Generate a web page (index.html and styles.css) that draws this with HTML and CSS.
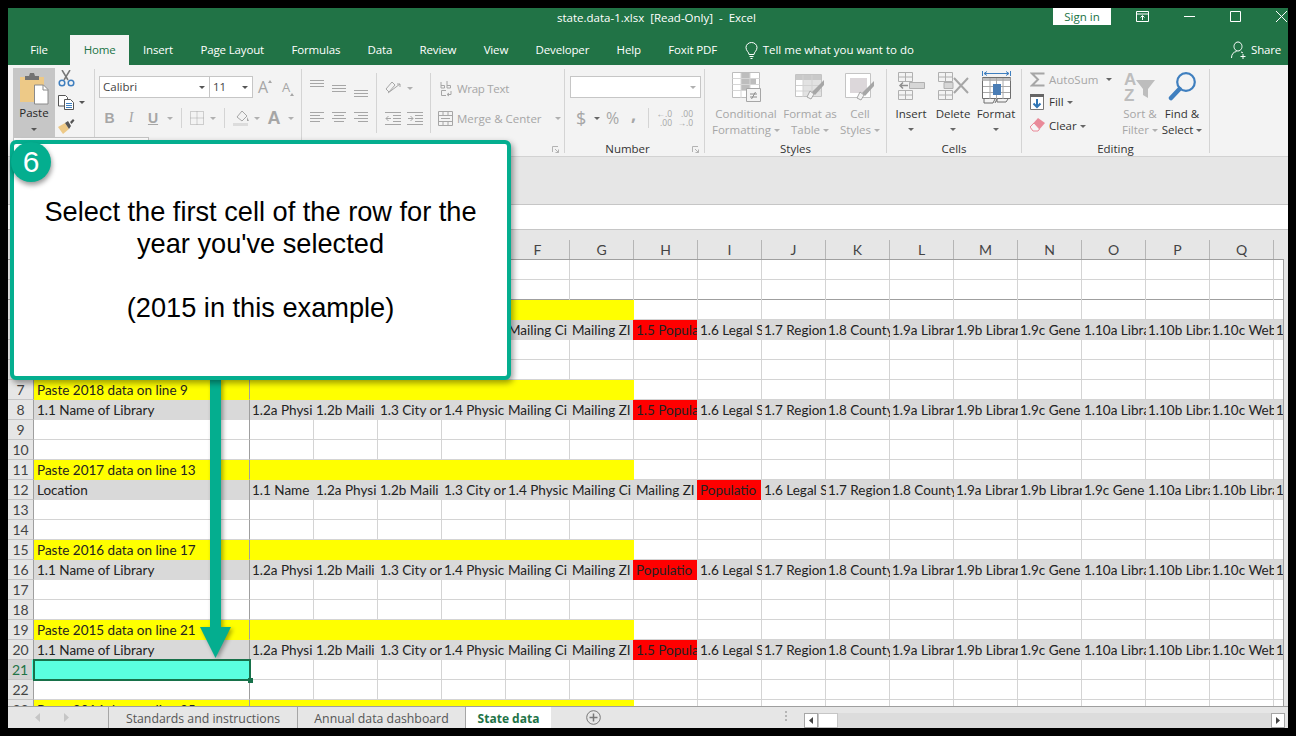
FILE: index.html
```html
<!DOCTYPE html>
<html lang="en">
<head>
  <meta charset="UTF-8">
  <title>state.data-1.xlsx [Read-Only] - Excel</title>
  <link rel="stylesheet" href="styles.css">
</head>
<body>
  <div class="window">

    <svg class="decor" width="448" height="57" viewBox="840 8 448 57">
      <path d="M847 8h3v12h-3zM853 8h3v12h-3zM861 8h4v10h-4zM868 8h4v23h-4zM876 8h4v10h-4zM912 8h14v20l-5 5-9-7zM937 8h12v27h-12zM954 8h3v27h-3zM960 8h3v27h-3zM965 8h3v27h-3zM970 8h3v26h-3zM975 8h3v24h-3zM980 8h3v20h-3zM985 8h3v14h-3z"/>
      <path d="M1005 8a11 7 0 0 0 22 0h-4a7 4 0 0 1-14 0z"/>
      <path d="M1052 30c0 6 6 10 14 10s14-4 14-10l-6 0c0 3-4 5-8 5s-8-2-8-5z"/>
      <path d="M1100 8l70 0-6 22-14 22h-18l-18-14-14-24zM1240 45l48-37v14l-36 31zM1215 34l32-26h12l-38 32z"/>
    </svg>

    <div class="titlebar">
      <span class="doc-title">state.data-1.xlsx &nbsp;[Read-Only] &nbsp;- &nbsp;Excel</span>
      <button class="signin">Sign in</button>
      <span class="winbtn">
        <svg width="14" height="12" viewBox="0 0 14 12" fill="none" stroke="#fff"><path d="M.5.500h12v10H.5zM.5 3h12M6.500 9V5M4.500 6.500l2-2 2 2"/></svg>
      </span>
      <span class="winbtn">
        <svg width="11" height="2" viewBox="0 0 11 2"><path d="M0 .5h11" stroke="#fff"/></svg>
      </span>
      <span class="winbtn">
        <svg width="11" height="11" viewBox="0 0 11 11" fill="none" stroke="#fff"><path d="M.5.500h10v10H.5z"/></svg>
      </span>
      <span class="winbtn winbtn-close">
        <svg width="11" height="11" viewBox="0 0 11 11" fill="none" stroke="#fff"><path d="M0 0l11 11M11 0L0 11"/></svg>
      </span>
    </div>

    <div class="tabs">
      <span class="tab tab-file">File</span>
      <span class="tab tab-on">Home</span>
      <span class="tab">Insert</span>
      <span class="tab">Page Layout</span>
      <span class="tab">Formulas</span>
      <span class="tab">Data</span>
      <span class="tab">Review</span>
      <span class="tab">View</span>
      <span class="tab">Developer</span>
      <span class="tab">Help</span>
      <span class="tab">Foxit PDF</span>
      <span class="tellme">
        <svg width="13" height="17" viewBox="0 0 13 17" fill="none" stroke="#fff"><path d="M4 12.500C4 10 1 9 1 5.500a5.500 5 0 0 1 11 0C12 9 9 10 9 12.500zM4.500 14.500h4M5.500 16.500h2"/></svg>
        Tell me what you want to do
      </span>
      <span class="share">
        <svg width="16" height="18" viewBox="0 0 16 18" fill="none" stroke="#fff"><path d="M7 1a4 4.500 0 1 1-.01 0zM.5 17c0-4 2-6 5-6.500M10 11c.8.2 1.500.5 2 1M12 13v5M9.500 15.500h5"/></svg>
        Share
      </span>
    </div>

    <div class="ribbon">

      <div class="g g-clip">
        <div class="g-body">
          <div class="paste">
            <svg width="30" height="32" viewBox="0 0 30 32">
              <path d="M1 4h24v25H1z" fill="#edc987"/>
              <path d="M6 3h4l1-3h4l1 3h4v4H6z" fill="#737373"/>
              <path d="M15.500 12h9l4.500 4.500V31H15.500z" fill="#fff" stroke="#8a8a8a"/>
              <path d="M24 12v5h5" fill="none" stroke="#8a8a8a"/>
            </svg>
            <span class="lbl">Paste</span>
            <i class="caret"></i>
          </div>
          <div class="clip-tools">
            <svg width="17" height="17" viewBox="0 0 17 17" fill="none">
              <path d="M4 0l6 10M12 0L6 10" stroke="#777" stroke-width="1.500"/>
              <circle cx="4" cy="13" r="2.800" stroke="#3f7fbf" stroke-width="1.500"/>
              <circle cx="13" cy="13" r="2.800" stroke="#3f7fbf" stroke-width="1.500"/>
            </svg>
            <span class="copy-row">
              <svg width="16" height="15" viewBox="0 0 16 15" fill="#fff" stroke="#555">
                <path d="M.5.500h7l2 2V11H.5z"/>
                <path d="M6.500 4.500h6l3 3v7h-9z"/>
                <path d="M8 8.500h6M8 10.500h6M8 12.500h6" stroke="#3f7fbf"/>
              </svg>
              <i class="caret"></i>
            </span>
            <svg width="17" height="16" viewBox="0 0 17 16">
              <path d="M0 9l7-4 4 6-6 5z" fill="#edc987"/>
              <path d="M7 5l3-2 3 5-2 3zM12 4l3-3 1.500 1.500-3 3.500z" fill="#555"/>
            </svg>
          </div>
        </div>
        <div class="g-label"></div>
      </div>

      <div class="g g-font">
        <div class="g-body">
          <div class="font-row1">
            <span class="combo combo-font">Calibri<i class="caret"></i></span>
            <span class="combo combo-size">11<i class="caret"></i></span>
            <span class="grow">A<i class="caret caret-up"></i></span>
            <span class="grow grow-sm">A<i class="caret caret-up"></i></span>
          </div>
          <div class="font-row2">
            <span class="fi fi-b">B</span>
            <span class="fi fi-i">I</span>
            <span class="fi fi-u">U</span>
            <span class="ci"><i class="caret caret-off"></i></span>
            <span class="vsep"></span>
            <span class="fi fi-box">
              <svg width="14" height="14" viewBox="0 0 14 14" fill="none" stroke="#a6a6a6" stroke-dasharray="1 1"><path d="M.5.500h13v13H.5zM7 .5v13M.5 7h13"/></svg>
            </span>
            <span class="ci"><i class="caret caret-off"></i></span>
            <span class="vsep"></span>
            <span class="fi fi-fill">
              <svg width="18" height="18" viewBox="0 0 18 18"><path d="M5 8l5-6 5 5-5 5z" fill="none" stroke="#a6a6a6"/><path d="M15 8l2 4-2 0z" fill="#a6a6a6"/><path d="M1 14h15v3H1z" fill="#dcdcdc"/></svg>
            </span>
            <span class="ci ci-narrow"><i class="caret caret-off"></i></span>
            <span class="fi fi-a">A</span>
            <span class="ci ci-narrow"><i class="caret caret-off"></i></span>
          </div>
        </div>
        <div class="g-label"></div>
      </div>

      <div class="g g-align">
        <div class="g-body">
          <div class="al-row al-row1">
            <span class="ai"><svg width="14" height="18" viewBox="0 0 14 18" stroke="#a6a6a6"><path d="M0 1.500h14M0 4.500h14M0 7.500h14"/></svg></span>
            <span class="ai"><svg width="14" height="18" viewBox="0 0 14 18" stroke="#a6a6a6"><path d="M0 6.500h14M0 9.500h14M0 12.500h14"/></svg></span>
            <span class="ai"><svg width="14" height="18" viewBox="0 0 14 18" stroke="#a6a6a6"><path d="M0 11.500h14M0 14.500h14M0 17.500h14"/></svg></span>
            <span class="vsep vsep-tall"></span>
            <span class="ori">
              <svg width="17" height="17" viewBox="0 0 17 17" fill="none" stroke="#a6a6a6"><path d="M1 9l6-7 3 3-6 7zM3 13l12-9M12 4h3v3"/></svg>
              <i class="caret caret-off"></i>
            </span>
            <span class="vsep vsep-tall"></span>
            <span class="wrap">
              <svg width="12" height="17" viewBox="0 0 12 17" fill="none" stroke="#a6a6a6"><path d="M1 2v6M1 5.500h3.500v2.500H1M7 1v7M7 5.500h3.500v2.500H7M6 10.500H1.500v5H6M11 11v3.500H7.500M9 13l-2 1.500L9 16"/></svg>
              Wrap Text
            </span>
          </div>
          <div class="al-row">
            <span class="ai"><svg width="14" height="12" viewBox="0 0 14 12" stroke="#a6a6a6"><path d="M0 .5h14M0 3.500h10M0 6.500h14M0 9.500h10"/></svg></span>
            <span class="ai"><svg width="14" height="12" viewBox="0 0 14 12" stroke="#a6a6a6"><path d="M0 .5h14M2 3.500h10M0 6.500h14M2 9.500h10"/></svg></span>
            <span class="ai"><svg width="14" height="12" viewBox="0 0 14 12" stroke="#a6a6a6"><path d="M0 .5h14M4 3.500h10M0 6.500h14M4 9.500h10"/></svg></span>
            <span class="vsep vsep-tall"></span>
            <span class="indents">
              <svg width="16" height="13" viewBox="0 0 16 13" fill="none" stroke="#a6a6a6"><path d="M0 .5h16M8 3.500h8M8 6.500h8M8 9.500h8M0 12.500h16M6 6.500H1M3.500 4L1 6.500 3.500 9" /></svg>
              <svg width="16" height="13" viewBox="0 0 16 13" fill="none" stroke="#a6a6a6"><path d="M0 .5h16M8 3.500h8M8 6.500h8M8 9.500h8M0 12.500h16M1 6.500h5M3.500 4L6 6.500 3.500 9" /></svg>
            </span>
            <span class="vsep vsep-tall"></span>
            <span class="merge">
              <svg width="15" height="15" viewBox="0 0 15 15" fill="none" stroke="#a6a6a6"><path d="M.5.500h14v14H.5zM.5 4.500h14M.5 10.500h14M5 .5v4M10 .5v4M5 10.500v4M10 10.500v4M3 7.500h9"/></svg>
              Merge &amp; Center
              <i class="caret caret-off"></i>
            </span>
          </div>
        </div>
        <div class="g-label"></div>
        <svg class="launcher" width="7" height="7" viewBox="0 0 7 7" fill="none" stroke="#b3b3b3"><path d="M.5 6V.5H6M3 3l3.500 3.500M6.500 3.500v3h-3"/></svg>
      </div>

      <div class="g g-num">
        <div class="g-body">
          <span class="combo combo-num"><i class="caret caret-off"></i></span>
          <div class="num-row">
            <span class="nsym nsym-dollar">$</span>
            <i class="caret caret-dark"></i>
            <span class="nsym nsym-pct">%</span>
            <span class="nsym nsym-comma">,</span>
            <span class="vsep vsep-num"></span>
            <span class="dec">
              <span>&larr;.0</span>
              <span>.00</span>
            </span>
            <span class="dec dec-2">
              <span>.00</span>
              <span>&rarr;.0</span>
            </span>
          </div>
        </div>
        <div class="g-label g-label-num">Number</div>
        <svg class="launcher" width="7" height="7" viewBox="0 0 7 7" fill="none" stroke="#b3b3b3"><path d="M.5 6V.5H6M3 3l3.500 3.500M6.500 3.500v3h-3"/></svg>
      </div>

      <div class="g g-styles">
        <div class="g-body">
          <div class="tall tall-cond off">
            <span class="tall-ico">
              <svg width="29" height="30" viewBox="0 0 29 30">
                <path d="M.5.500h27v25H.5z" fill="#fff" stroke="#bdbdbd"/>
                <path d="M9 1h9v5H9zM9 6h15v6H9zM9 12h9v6H9z" fill="#bdbdbd"/>
                <path d="M9 1v25M18 1v15M.5 6.500h27M.5 12.500h27M.5 18.500h14" stroke="#d6d6d6" fill="none"/>
                <path d="M14.500 16.500h14v13h-14z" fill="#f3f3f3" stroke="#a6a6a6"/>
                <path d="M18 22h7M18 25h7M23.500 20l-4 7" stroke="#8c8c8c" fill="none"/>
              </svg>
            </span>
            <span class="lbl">Conditional</span>
            <span class="lbl">Formatting<i class="caret caret-off"></i></span>
          </div>
          <div class="tall tall-fmt off">
            <span class="tall-ico">
              <svg width="30" height="30" viewBox="0 0 30 30">
                <path d="M.5 2.500h26v22H.5z" fill="#fff" stroke="#c4c4c4"/>
                <path d="M1 3h25v5H1z" fill="#c9c9c9"/>
                <path d="M8 8h18v16H8z" fill="#e2e2e2"/>
                <path d="M8 3v22M17 3v22M1 13.500h25M1 19h25" stroke="#d2d2d2" fill="none"/>
                <path d="M12 25l3-6 4 3-3 5z" fill="#f3f3f3" stroke="#a6a6a6"/>
                <path d="M17 20L29 8v5l-9 10z" fill="#a6a6a6"/>
              </svg>
            </span>
            <span class="lbl">Format as</span>
            <span class="lbl">Table<i class="caret caret-off"></i></span>
          </div>
          <div class="tall tall-cell off">
            <span class="tall-ico">
              <svg width="30" height="30" viewBox="0 0 30 30">
                <path d="M.5 1.500h25v24H.5z" fill="#fff" stroke="#c4c4c4"/>
                <path d="M5 6h17v15H5z" fill="#dcd7da"/>
                <path d="M12 26l3-6 4 3-3 5z" fill="#f3f3f3" stroke="#a6a6a6"/>
                <path d="M17 21L29 9v5l-9 10z" fill="#a6a6a6"/>
              </svg>
            </span>
            <span class="lbl">Cell</span>
            <span class="lbl">Styles<i class="caret caret-off"></i></span>
          </div>
        </div>
        <div class="g-label">Styles</div>
      </div>

      <div class="g g-cells">
        <div class="g-body">
          <div class="tall tall-ins">
            <span class="tall-ico">
              <svg width="27" height="28" viewBox="0 0 27 28" fill="none" stroke="#b0b0b0">
                <path d="M.5.500h14v9H.5zM7.500.5v9M.5 5h14M.5 18.500h14v9H.5zM7.500 18.500v9M.5 23h14"/>
                <path d="M11.500 10.500h15v6h-15z" fill="#d6d6d6"/>
                <path d="M10 13.500H2M5 10.500l-3 3 3 3" stroke="#8f8f8f" stroke-width="1.500"/>
              </svg>
            </span>
            <span class="lbl">Insert</span>
            <i class="caret caret-dark"></i>
          </div>
          <div class="tall tall-del">
            <span class="tall-ico">
              <svg width="31" height="28" viewBox="0 0 31 28" fill="none" stroke="#b0b0b0">
                <path d="M.5.500h14v9H.5zM7.500.5v9M.5 5h14M.5 18.500h14v9H.5zM7.500 18.500v9M.5 23h14"/>
                <path d="M6 10.500h9v6H6z" fill="#d6d6d6"/>
                <path d="M16 6l14 15M30 6L16 21" stroke="#a6a6a6" stroke-width="2"/>
              </svg>
            </span>
            <span class="lbl">Delete</span>
            <i class="caret caret-dark"></i>
          </div>
          <div class="tall tall-form">
            <span class="tall-ico">
              <svg width="29" height="34" viewBox="0 0 29 34" fill="none">
                <path d="M.5 0v5M28.500 0v5M2 2.500h25M5 .5l-3 2 3 2M24 .5l3 2-3 2" stroke="#3f7fbf"/>
                <path d="M.5 6.500h28v21H.5z" fill="#fff" stroke="#6f6f6f"/>
                <path d="M.5 7h28v3H.5z" fill="#bdbdbd"/>
                <path d="M8 7v21M21 7v21M14.500 7v21M1 15.500h27M1 21.500h27" stroke="#a8a8a8"/>
                <path d="M11 13h8v11h-8z" fill="#4a7db5"/>
                <path d="M2 28v4h9l2-4M15 28l-2 4M15 28v3h9l2-3" stroke="#6f6f6f"/>
              </svg>
            </span>
            <span class="lbl">Format</span>
            <i class="caret caret-dark"></i>
          </div>
        </div>
        <div class="g-label">Cells</div>
      </div>

      <div class="g g-edit">
        <div class="g-body">
          <div class="edit-col">
            <span class="edit-row off">
              <svg width="15" height="15" viewBox="0 0 15 15" fill="none" stroke="#a6a6a6" stroke-width="2"><path d="M14.500 1.500H2l6 6-6 6h12.500"/></svg>
              <span class="edit-txt">AutoSum</span>
              <i class="caret caret-dark caret-far"></i>
            </span>
            <span class="edit-row">
              <svg width="15" height="17" viewBox="0 0 15 17"><path d="M.5 1.500h13v15H.5z" fill="#fff" stroke="#777"/><path d="M0 1h14v3H0z" fill="#666"/><path d="M7 6v8M3.500 10.500L7 14l3.500-3.500" fill="none" stroke="#2f75b5" stroke-width="2"/></svg>
              <span class="edit-txt">Fill<i class="caret caret-dark"></i></span>
            </span>
            <span class="edit-row">
              <svg width="15" height="14" viewBox="0 0 15 14"><path d="M0 9l8-9 7 5-7 8H3z" fill="#e98a99"/><path d="M0 9l3 4h5l1.500-2L4 5z" fill="#f5f5f5" stroke="#e98a99"/></svg>
              <span class="edit-txt">Clear<i class="caret caret-dark"></i></span>
            </span>
          </div>
          <div class="tall tall-sort off">
            <span class="tall-ico">
              <svg width="32" height="30" viewBox="0 0 32 30">
                <text x="0" y="13" class="sort-letter">A</text>
                <text x="0" y="29" class="sort-letter">Z</text>
                <path d="M12 8h19l-7 9v9l-5-3v-6z" fill="#bdbdbd"/>
              </svg>
            </span>
            <span class="lbl">Sort &amp;</span>
            <span class="lbl">Filter<i class="caret caret-off"></i></span>
          </div>
          <div class="tall tall-find">
            <span class="tall-ico">
              <svg width="29" height="29" viewBox="0 0 29 29" fill="none" stroke="#3f7fbf">
                <circle cx="18" cy="10" r="8.800" stroke-width="2.200"/>
                <path d="M11.500 17L3 26" stroke-width="4.500" stroke-linecap="round"/>
              </svg>
            </span>
            <span class="lbl">Find &amp;</span>
            <span class="lbl">Select<i class="caret caret-dark"></i></span>
          </div>
        </div>
        <div class="g-label">Editing</div>
      </div>
    </div>

    <div class="formula-gap"></div>
    <div class="formula-bar"></div>

    <div class="sheet">
      <div class="colhead">
        <span class="corner"></span>
        <span class="ch ch-a"></span>
        <span class="ch"></span><span class="ch"></span><span class="ch"></span><span class="ch"></span>
        <span class="ch">F</span><span class="ch">G</span><span class="ch">H</span><span class="ch">I</span>
        <span class="ch">J</span><span class="ch">K</span><span class="ch">L</span><span class="ch">M</span>
        <span class="ch">N</span><span class="ch">O</span><span class="ch">P</span><span class="ch">Q</span>
        <span class="ch ch-last"></span>
      </div>

      <div class="rows">
        <div class="row"><span class="rn"></span><span class="a"></span><span class="cells"></span></div>
        <div class="row freeze"><span class="rn"></span><span class="a"></span><span class="cells"></span></div>
        <div class="row"><span class="rn"></span><span class="a yellow"></span><span class="cells"><span class="yellow-span"></span></span></div>
        <div class="row filled">
          <span class="rn"></span><span class="a"></span>
          <span class="cells">
            <span class="c"></span><span class="c"></span><span class="c"></span><span class="c"></span><span class="c">Mailing Ci</span><span class="c">Mailing ZI</span><span class="c red">1.5 Popula</span><span class="c">1.6 Legal S</span><span class="c">1.7 Region</span><span class="c">1.8 County</span><span class="c">1.9a Librar</span><span class="c">1.9b Librar</span><span class="c">1.9c Gene</span><span class="c">1.10a Libra</span><span class="c">1.10b Libra</span><span class="c">1.10c Web</span><span class="c c-end">1</span>
          </span>
        </div>
        <div class="row"><span class="rn"></span><span class="a"></span><span class="cells"></span></div>
        <div class="row"><span class="rn"></span><span class="a"></span><span class="cells"></span></div>
        <div class="row"><span class="rn">7</span><span class="a yellow">Paste 2018 data on line 9</span><span class="cells"><span class="yellow-span"></span></span></div>
        <div class="row filled">
          <span class="rn">8</span><span class="a">1.1 Name of Library</span>
          <span class="cells">
            <span class="c">1.2a Physi</span><span class="c">1.2b Maili</span><span class="c">1.3 City or</span><span class="c">1.4 Physic</span><span class="c">Mailing Ci</span><span class="c">Mailing ZI</span><span class="c red">1.5 Popula</span><span class="c">1.6 Legal S</span><span class="c">1.7 Region</span><span class="c">1.8 County</span><span class="c">1.9a Librar</span><span class="c">1.9b Librar</span><span class="c">1.9c Gene</span><span class="c">1.10a Libra</span><span class="c">1.10b Libra</span><span class="c">1.10c Web</span><span class="c c-end">1</span>
          </span>
        </div>
        <div class="row"><span class="rn">9</span><span class="a"></span><span class="cells"></span></div>
        <div class="row"><span class="rn">10</span><span class="a"></span><span class="cells"></span></div>
        <div class="row"><span class="rn">11</span><span class="a yellow">Paste 2017 data on line 13</span><span class="cells"><span class="yellow-span"></span></span></div>
        <div class="row filled">
          <span class="rn">12</span><span class="a">Location</span>
          <span class="cells">
            <span class="c">1.1 Name</span><span class="c">1.2a Physi</span><span class="c">1.2b Maili</span><span class="c">1.3 City or</span><span class="c">1.4 Physic</span><span class="c">Mailing Ci</span><span class="c">Mailing ZI</span><span class="c red">Populatio</span><span class="c">1.6 Legal S</span><span class="c">1.7 Region</span><span class="c">1.8 County</span><span class="c">1.9a Librar</span><span class="c">1.9b Librar</span><span class="c">1.9c Gene</span><span class="c">1.10a Libra</span><span class="c">1.10b Libra</span><span class="c c-end">1</span>
          </span>
        </div>
        <div class="row"><span class="rn">13</span><span class="a"></span><span class="cells"></span></div>
        <div class="row"><span class="rn">14</span><span class="a"></span><span class="cells"></span></div>
        <div class="row"><span class="rn">15</span><span class="a yellow">Paste 2016 data on line 17</span><span class="cells"><span class="yellow-span"></span></span></div>
        <div class="row filled">
          <span class="rn">16</span><span class="a">1.1 Name of Library</span>
          <span class="cells">
            <span class="c">1.2a Physi</span><span class="c">1.2b Maili</span><span class="c">1.3 City or</span><span class="c">1.4 Physic</span><span class="c">Mailing Ci</span><span class="c">Mailing ZI</span><span class="c red">Populatio</span><span class="c">1.6 Legal S</span><span class="c">1.7 Region</span><span class="c">1.8 County</span><span class="c">1.9a Librar</span><span class="c">1.9b Librar</span><span class="c">1.9c Gene</span><span class="c">1.10a Libra</span><span class="c">1.10b Libra</span><span class="c">1.10c Web</span><span class="c c-end">1</span>
          </span>
        </div>
        <div class="row"><span class="rn">17</span><span class="a"></span><span class="cells"></span></div>
        <div class="row"><span class="rn">18</span><span class="a"></span><span class="cells"></span></div>
        <div class="row"><span class="rn">19</span><span class="a yellow">Paste 2015 data on line 21</span><span class="cells"><span class="yellow-span"></span></span></div>
        <div class="row filled">
          <span class="rn">20</span><span class="a">1.1 Name of Library</span>
          <span class="cells">
            <span class="c">1.2a Physi</span><span class="c">1.2b Maili</span><span class="c">1.3 City or</span><span class="c">1.4 Physic</span><span class="c">Mailing Ci</span><span class="c">Mailing ZI</span><span class="c red">1.5 Popula</span><span class="c">1.6 Legal S</span><span class="c">1.7 Region</span><span class="c">1.8 County</span><span class="c">1.9a Librar</span><span class="c">1.9b Librar</span><span class="c">1.9c Gene</span><span class="c">1.10a Libra</span><span class="c">1.10b Libra</span><span class="c">1.10c Web</span><span class="c c-end">1</span>
          </span>
        </div>
        <div class="row row-sel"><span class="rn">21</span><span class="a a-sel"><i class="handle"></i></span><span class="cells"></span></div>
        <div class="row"><span class="rn">22</span><span class="a"></span><span class="cells"></span></div>
        <div class="row"><span class="rn">23</span><span class="a yellow">Paste 2014 data on line 25</span><span class="cells"><span class="yellow-span"></span></span></div>
      </div>
    </div>

    <div class="sheetbar">
      <span class="sheet-nav">
        <svg width="5" height="9" viewBox="0 0 5 9"><path d="M5 0v9L0 4.500z" fill="#c6c6c6"/></svg>
        <svg width="5" height="9" viewBox="0 0 5 9"><path d="M0 0v9l5-4.500z" fill="#c6c6c6"/></svg>
      </span>
      <span class="stab stab-1">Standards and instructions</span>
      <span class="stab stab-2">Annual data dashboard</span>
      <span class="stab stab-on">State data</span>
      <svg class="addsheet" width="15" height="15" viewBox="0 0 15 15" fill="none" stroke="#777"><circle cx="7.500" cy="7.500" r="6.800"/><path d="M7.500 3.500v8M3.500 7.500h8" stroke-width="1.500"/></svg>
      <span class="dots"></span>
      <div class="hscroll">
        <span class="sbtn"><svg width="4" height="7" viewBox="0 0 4 7"><path d="M4 0v7L0 3.500z" fill="#444"/></svg></span>
        <span class="sthumb"></span>
        <span class="sbtn sbtn-end"><svg width="4" height="7" viewBox="0 0 4 7"><path d="M0 0v7l4-3.500z" fill="#444"/></svg></span>
      </div>
    </div>

    <!-- things drawn on top of the workbook -->
    <div class="peek"></div>
    <svg class="arrow" width="40" height="290" viewBox="0 0 40 290">
      <path d="M15 0h11v249h10l-15.500 31L5 249h10z" fill="#04ae8f"/>
    </svg>
    <div class="callout">
      <span class="badge">6</span>
      <p>Select the first cell of the row for the<br>year you've selected</p>
      <p class="callout-note">(2015 in this example)</p>
    </div>
  </div>
</body>
</html>
```

FILE: styles.css
```css
* {
  box-sizing: border-box;
}

body {
  margin: 0;
  width: 1296px;
  height: 736px;
  overflow: hidden;
  background-color: #000;
  font-family: "Open Sans", sans-serif;
  font-size: 12px;
  color: #333;
}

.window {
  position: relative;
  width: 1280px;
  height: 720px;
  margin: 8px;
  display: flex;
  flex-direction: column;
  overflow: hidden;
  background-color: #e6e6e6;
}

.decor {
  position: absolute;
  left: 832px;
  top: 0;
  fill: #1f6b41;
}

/* title bar and tabs */
.titlebar {
  position: relative;
  height: 27px;
  display: flex;
  background-color: #217346;
  color: #fff;
}

.doc-title {
  margin-left: 549px;
  margin-top: 1px;
  line-height: 18px;
  font-size: 11.5px;
}

.signin {
  margin-left: auto;
  width: 58px;
  height: 17px;
  padding: 0;
  border: none;
  background-color: #fff;
  color: #217346;
  font-family: inherit;
  font-size: 11.5px;
  line-height: 17px;
}

.winbtn {
  width: 46px;
  height: 17px;
  display: flex;
  align-items: center;
  justify-content: center;
}

.signin + .winbtn {
  margin-left: 9px;
}

.winbtn-close {
  width: 30px;
  justify-content: flex-end;
  padding-right: 1px;
}

.tabs {
  position: relative;
  height: 30px;
  display: flex;
  align-items: stretch;
  background-color: #217346;
  color: #fff;
  line-height: 30px;
}

.tab {
  padding: 0 13.7px;
  font-size: 11.5px;
  letter-spacing: -0.15px;
}

.tab-file {
  width: 62px;
  text-align: center;
}

.tab-on {
  background-color: #f3f3f3;
  color: #217346;
}

.tellme {
  margin-left: 14px;
  display: flex;
  align-items: center;
  gap: 5px;
  font-size: 11.5px;
}

.share {
  margin-left: auto;
  margin-right: 7px;
  display: flex;
  align-items: center;
  gap: 4px;
  font-size: 11.5px;
  letter-spacing: -0.2px;
}

/* ribbon */
.ribbon {
  height: 92px;
  display: flex;
  align-items: flex-start;
  padding-top: 4px;
  background-color: #f3f3f3;
  border-bottom: 1px solid #d2d2d2;
}

.g {
  position: relative;
  height: 84px;
  border-right: 1px solid #d4d4d4;
  display: flex;
  flex-direction: column;
}

.g-clip { width: 87px; }
.g-font { width: 207px; }
.g-align { width: 263px; }
.g-num { width: 140px; }
.g-styles { width: 182px; }
.g-cells { width: 135px; }
.g-edit { width: 188px; }

.g-body {
  height: 72px;
}

.g-label {
  height: 12px;
  line-height: 16px;
  text-align: center;
  font-size: 11.5px;
}

.g-label-num {
  padding-right: 14px;
}

.launcher {
  position: absolute;
  right: 5px;
  bottom: 0;
}

.caret {
  display: inline-block;
  width: 0;
  height: 0;
  border-left: 3.5px solid transparent;
  border-right: 3.5px solid transparent;
  border-top: 3.5px solid #555;
}

.caret-off {
  border-top-color: #b0b0b0;
}

.caret-dark {
  border-top-color: #666;
}

.caret-up {
  border-top: none;
  border-bottom: 3px solid #a6a6a6;
}

.lbl {
  display: block;
  line-height: 16px;
  height: 16px;
  font-size: 11.5px;
  white-space: nowrap;
}

.lbl .caret {
  margin-left: 3px;
  vertical-align: 2px;
}

.off {
  color: #a6a6a6;
}

.vsep {
  width: 1px;
  height: 20px;
  margin: 0 5px;
  background-color: #d4d4d4;
}

.vsep-tall {
  height: 30px;
  margin: 0;
}

/* clipboard */
.g-clip .g-body {
  display: flex;
  margin-left: 5px;
}

.paste {
  width: 42px;
  height: 69px;
  margin-top: -1px;
  padding-top: 5px;
  display: flex;
  flex-direction: column;
  align-items: center;
  background-color: #c6c6c6;
  color: #262626;
}

.paste .lbl {
  margin-top: 0;
}

.paste .caret {
  margin-top: 7px;
}

.clip-tools {
  margin-left: 3px;
  display: flex;
  flex-direction: column;
  gap: 8px;
  padding-top: 1px;
}

.copy-row {
  display: flex;
  align-items: center;
  gap: 5px;
}

/* font */
.g-font .g-body {
  padding: 7px 0 0 4px;
}

.font-row1 {
  display: flex;
  align-items: center;
}

.combo {
  position: relative;
  height: 22px;
  display: block;
  flex-shrink: 0;
  border: 1px solid #c6c6c6;
  background-color: #fff;
  line-height: 20px;
  padding-left: 3px;
  color: #444;
  font-size: 11.5px;
}

.combo .caret {
  position: absolute;
  right: 4px;
  top: 9px;
}

.combo-font { width: 111px; }

.combo-size {
  width: 43px;
  border-left: none;
}

.grow {
  width: 24px;
  flex-shrink: 0;
  padding-left: 5px;
  font-size: 16px;
  color: #a6a6a6;
  display: flex;
}

.grow-sm {
  font-size: 13px;
  padding-left: 5px;
  align-items: flex-end;
}

.grow .caret {
  margin-top: 4px;
  border-left-width: 2.500px;
  border-right-width: 2.500px;
}

.font-row2 {
  margin-top: 10px;
  height: 20px;
  display: flex;
  align-items: center;
  color: #a6a6a6;
}

.fi {
  width: 21px;
  display: flex;
  justify-content: center;
  font-size: 14px;
}

.fi-b { font-weight: bold; font-family: "Liberation Sans", sans-serif; }
.fi-i { width: 22px; font-style: italic; font-family: "Liberation Serif", serif; }
.fi-u { width: 22px; font-weight: bold; text-decoration: underline; font-family: "Liberation Sans", sans-serif; }
.fi-box { width: 20px; }
.fi-fill { width: 22px; }
.fi-a { width: 24px; font-size: 18px; font-weight: bold; font-family: "Liberation Sans", sans-serif; }

.ci {
  width: 12px;
  display: flex;
  justify-content: center;
}

.ci-narrow {
  width: 10px;
}

/* alignment */
.g-align .g-body {
  padding: 4px 0 0 8px;
}

.al-row {
  height: 30px;
  display: flex;
  align-items: center;
  color: #a6a6a6;
}

.ai {
  width: 22px;
  display: flex;
}

.ori {
  width: 53px;
  padding-left: 8px;
  display: flex;
  align-items: center;
  gap: 5px;
}

.wrap,
.merge {
  display: flex;
  align-items: center;
  font-size: 11.5px;
}

.wrap {
  margin-left: 9px;
  gap: 5px;
  letter-spacing: -0.3px;
}

.merge {
  margin-left: 7px;
  gap: 4px;
}

.merge .caret {
  margin-left: 9px;
}

.indents {
  width: 53px;
  padding-left: 8px;
  display: flex;
  gap: 6px;
}

/* number */
.g-num .g-body {
  padding: 7px 0 0 5px;
}

.combo-num {
  width: 131px;
}

.num-row {
  margin-top: 10px;
  height: 20px;
  display: flex;
  align-items: center;
  color: #a6a6a6;
}

.nsym {
  font-size: 18px;
  line-height: 20px;
}

.nsym-dollar { margin-left: 6px; width: 15px; }
.num-row .caret { margin-left: 3px; }
.nsym-pct { margin-left: 6px; width: 20px; font-size: 16px; }
.nsym-comma { margin-left: 5px; width: 12px; font-weight: bold; position: relative; top: -4px; }
.vsep-num { margin: 0 0 0 5px; }

.dec {
  margin-left: 8px;
  width: 15px;
  display: flex;
  flex-direction: column;
  align-items: flex-end;
  font-size: 8.500px;
  line-height: 9px;
}

.dec-2 {
  margin-left: 6px;
}

/* tall buttons */
.g-styles .g-body,
.g-cells .g-body,
.g-edit .g-body {
  display: flex;
}

.g-styles .g-body { padding-left: 6px; }
.g-cells .g-body { padding-left: 3px; }
.g-edit .g-body { padding-left: 8px; }

.tall {
  display: flex;
  flex-direction: column;
  align-items: center;
}

.tall-ico {
  height: 37px;
  padding-top: 3px;
  display: block;
}

.tall .caret {
  margin-top: 6px;
}

.tall .lbl .caret {
  margin-top: 0;
}

.tall-cond { width: 70px; }
.tall-fmt { width: 58px; }
.tall-cell { width: 42px; }
.tall-ins { width: 42px; }
.tall-del { width: 42px; }
.tall-form { width: 44px; }
.tall-sort { width: 44px; }
.tall-find { width: 40px; }

.tall-form .tall-ico {
  padding-top: 2px;
}

.sort-letter {
  font-family: "Liberation Sans", sans-serif;
  font-size: 17px;
  font-weight: bold;
  fill: #bdbdbd;
}

/* editing */
.edit-col {
  width: 88px;
}

.edit-row {
  height: 24px;
  display: flex;
  align-items: center;
  font-size: 11.5px;
}

.edit-row:first-child {
  height: 20px;
}

.edit-txt {
  margin-left: 4px;
}

.edit-txt .caret {
  margin-left: 3px;
  vertical-align: 2px;
}

.caret-far {
  margin-left: 8px;
}

/* formula bar */
.formula-gap {
  height: 47px;
  background-color: #e6e6e6;
}

.formula-bar {
  height: 26px;
  background-color: #fff;
  border-top: 1px solid #c6c6c6;
  border-bottom: 1px solid #c6c6c6;
}

/* sheet */
.sheet {
  height: 476px;
  overflow: hidden;
  flex-shrink: 0;
}

.colhead {
  height: 30px;
  padding-top: 10px;
  display: flex;
  border-bottom: 1px solid #9f9f9f;
  width: 1276px;
  font-family: Lato, sans-serif;
  font-size: 14px;
  color: #444;
}

.corner {
  width: 26px;
}

.ch {
  width: 64px;
  line-height: 19px;
  text-align: center;
  border-right: 1px solid #b5b5b5;
}

.ch-a {
  width: 216px;
}

.ch-last {
  width: 10px;
  border-right: none;
}

.rows {
  width: 1276px;
  border-right: 1px solid #9f9f9f;
}

.row {
  height: 20px;
  display: flex;
  font-family: Lato, sans-serif;
  font-size: 13.5px;
  line-height: 20px;
  color: #222;
  white-space: nowrap;
}

.rn {
  width: 26px;
  text-align: center;
  background-color: #e6e6e6;
  border-bottom: 1px solid #c6c6c6;
  border-right: 1px solid #9f9f9f;
  color: #444;
  font-size: 14px;
}

.a {
  width: 216px;
  padding-left: 3px;
  border-right: 1px solid #9f9f9f;
  border-bottom: 1px solid #d4d4d4;
  background-color: #fff;
  overflow: hidden;
}

.cells {
  flex: 1;
  display: flex;
  overflow: hidden;
  background-image: repeating-linear-gradient(90deg, transparent 0 63px, #d4d4d4 63px 64px), linear-gradient(#d4d4d4, #d4d4d4);
  background-size: auto, 100% 1px;
  background-position: 0 0, 0 100%;
  background-repeat: repeat, no-repeat;
  background-color: #fff;
}

.yellow {
  background-color: #ff0;
  border-bottom-color: #ff0;
}

.yellow-span {
  width: 384px;
  height: 20px;
  background-color: #ff0;
}

.filled .a,
.filled .cells {
  background-color: #d9d9d9;
  background-image: none;
  border-bottom: none;
}

.c {
  width: 64px;
  flex-shrink: 0;
  padding-left: 2px;
  overflow: hidden;
}

.c-end {
  width: 9px;
}

.red {
  margin-left: -1px;
  margin-right: 1px;
  padding-left: 3px;
  background-color: #f00;
}

.freeze .a,
.freeze .rn {
  border-bottom-color: #9f9f9f;
}

.freeze .cells {
  background-image: repeating-linear-gradient(90deg, transparent 0 63px, #d4d4d4 63px 64px), linear-gradient(#9f9f9f, #9f9f9f);
}

.row-sel .rn {
  background-color: #d2d2d2;
  color: #217346;
  border-right: 2px solid #5affdf;
}

.a-sel {
  position: relative;
  z-index: 1;
  margin: -1px -1px -1px -1px;
  width: 218px;
  height: 22px;
  border: 2px solid #17714a;
  background-color: #5affdf;
  overflow: visible;
}

.handle {
  position: absolute;
  right: -4px;
  bottom: -4px;
  width: 5px;
  height: 5px;
  background-color: #17714a;
}

/* sheet tabs and scroll bar */
.sheetbar {
  height: 22px;
  display: flex;
  align-items: stretch;
  border-top: 1px solid #9f9f9f;
  background-color: #e6e6e6;
  font-size: 12.300px;
  line-height: 23px;
  color: #555;
}

.sheet-nav {
  width: 101px;
  padding-left: 27px;
  display: flex;
  align-items: center;
  gap: 24px;
  border-right: 1px solid #a6a6a6;
}

.stab {
  text-align: center;
  border-right: 1px solid #a6a6a6;
  white-space: nowrap;
}

.stab-1 { width: 189px; }
.stab-2 { width: 168px; }

.stab-on {
  width: 85px;
  border-right: none;
  background-color: #fff;
  color: #217346;
  font-weight: bold;
  font-size: 12px;
}

.addsheet {
  margin: 3px 0 0 35px;
}

.dots {
  width: 2px;
  height: 12px;
  margin: 4px 0 0 184px;
  background-image: repeating-linear-gradient(#b5b5b5 0 2px, transparent 2px 4px);
}

.hscroll {
  width: 481px;
  height: 15px;
  margin: 6px 3px 0 auto;
  display: flex;
  background-color: #dcdcdc;
}

.sbtn {
  width: 14px;
  height: 15px;
  display: flex;
  align-items: center;
  justify-content: center;
  background-color: #fff;
  border: 1px solid #a6a6a6;
}

.sthumb {
  width: 20px;
  background-color: #fff;
  border: 1px solid #c6c6c6;
}

.sbtn-end {
  margin-left: auto;
}

/* overlay */
.peek {
  position: absolute;
  left: 5px;
  top: 129px;
  width: 136px;
  height: 6px;
  background-color: #fff;
  border: 1px solid #c6c6c6;
}

.arrow {
  position: absolute;
  left: 187px;
  top: 370px;
  overflow: visible;
  filter: drop-shadow(2px 2px 2px rgba(0, 0, 0, 0.35));
}

.callout {
  position: absolute;
  left: 2px;
  top: 132px;
  width: 501px;
  height: 240px;
  padding-top: 52px;
  border: 4px solid #04ae8f;
  border-radius: 6px;
  background-color: #fff;
  box-shadow: 2px 3px 6px rgba(0, 0, 0, 0.4);
  font-family: "Liberation Sans", sans-serif;
  font-size: 27.200px;
  line-height: 32px;
  text-align: center;
  color: #000;
}

.callout p {
  margin: 0;
}

.callout .callout-note {
  margin-top: 32px;
}

.badge {
  position: absolute;
  left: -3px;
  top: -2px;
  width: 40px;
  height: 40px;
  border-radius: 50%;
  background-color: #04ae8f;
  box-shadow: 1px 3px 5px rgba(0, 0, 0, 0.4);
  color: #fff;
  font-size: 30px;
  line-height: 40px;
}
```
